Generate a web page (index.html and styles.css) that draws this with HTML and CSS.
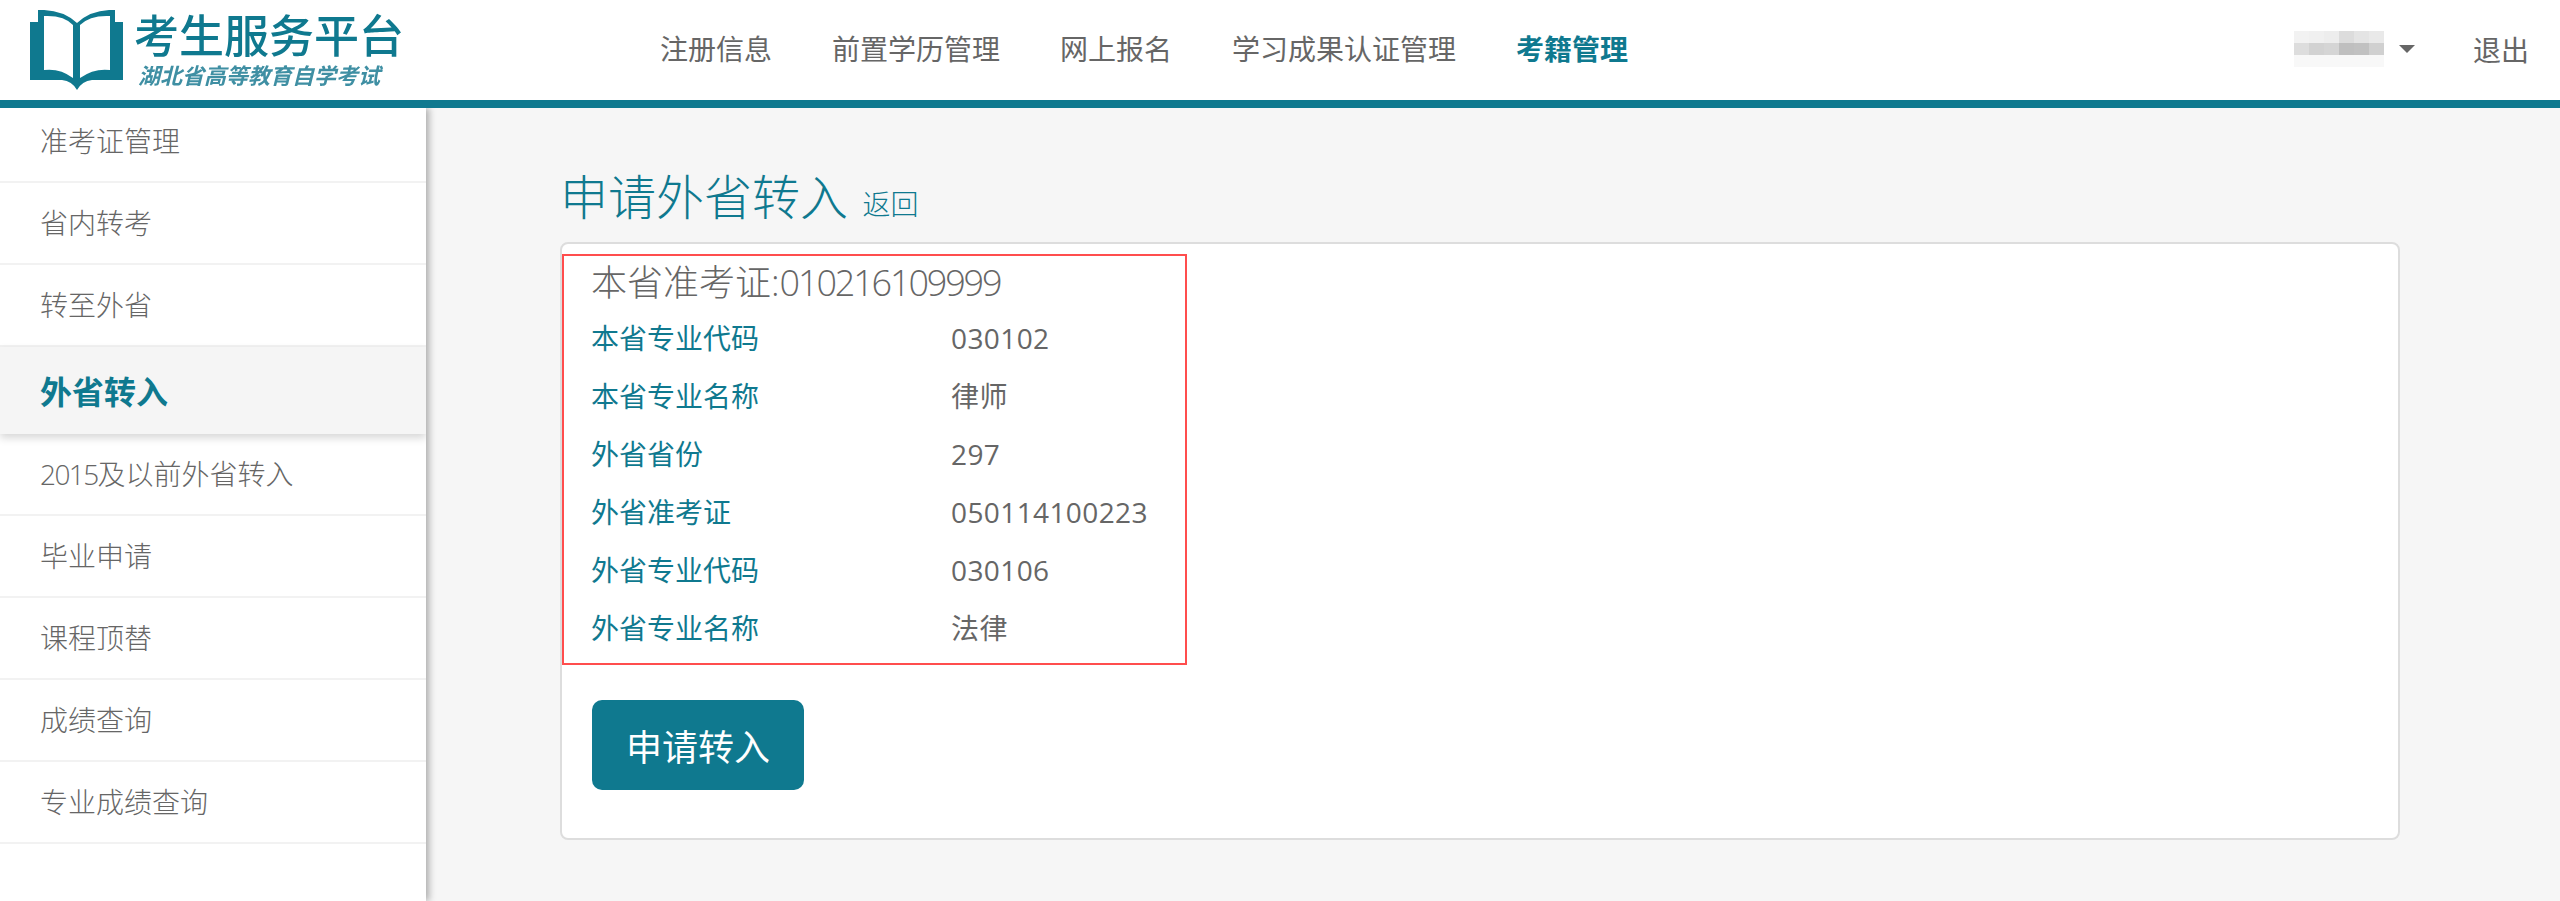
FILE: index.html
```html
<!DOCTYPE html>
<html lang="zh-CN">
<head>
<meta charset="utf-8">
<title>考生服务平台</title>
<link rel="stylesheet" href="styles.css">
</head>
<body>
<header class="topbar">
  <a class="logo">
    <svg class="logo-book" viewBox="0 0 94 80" width="94" height="80">
      <path fill="#0f798f" d="M0 12 H8 V0 Q32 -1 47 13 Q62 -1 85 0 V12 H93 V70 H62 Q52 71 47 80 Q42 71 32 70 H0 Z"/>
      <path fill="#fff" d="M14 6 Q34 5 43 15 V68 Q30 58 14 60 Z"/>
      <path fill="#fff" d="M50 15 Q60 5 80 6 V60 Q64 58 50 68 Z"/>
    </svg>
    <div class="logo-text">
      <div class="logo-title">考生服务平台</div>
      <div class="logo-sub">湖北省高等教育自学考试</div>
    </div>
  </a>
  <nav class="nav">
    <a>注册信息</a>
    <a>前置学历管理</a>
    <a>网上报名</a>
    <a>学习成果认证管理</a>
    <a class="nav-active">考籍管理</a>
  </nav>
  <div class="user">
    <svg class="user-blur" viewBox="0 0 6 3" width="90" height="36" preserveAspectRatio="none">
      <rect x="0" y="0" width="1" height="1" fill="#f2f2f2"/><rect x="1" y="0" width="1" height="1" fill="#f0f0f0"/><rect x="2" y="0" width="1" height="1" fill="#ededed"/><rect x="3" y="0" width="1" height="1" fill="#dcdcdc"/><rect x="4" y="0" width="1" height="1" fill="#e4e4e4"/><rect x="5" y="0" width="1" height="1" fill="#e9e9e9"/>
      <rect x="0" y="1" width="1" height="1" fill="#dddddd"/><rect x="1" y="1" width="1" height="1" fill="#d2d2d2"/><rect x="2" y="1" width="1" height="1" fill="#d5d5d5"/><rect x="3" y="1" width="1" height="1" fill="#bfbfbf"/><rect x="4" y="1" width="1" height="1" fill="#c1c1c1"/><rect x="5" y="1" width="1" height="1" fill="#d0d0d0"/>
      <rect x="0" y="2" width="6" height="1" fill="#f8f8f8"/>
    </svg>
    <span class="caret"></span>
    <a class="logout">退出</a>
  </div>
</header>
<div class="layout">
  <aside class="sidebar">
    <ul class="side-list">
      <li>准考证管理</li>
      <li>省内转考</li>
      <li>转至外省</li>
      <li class="side-active">外省转入</li>
      <li><span class="side-num">2015</span>及以前外省转入</li>
      <li>毕业申请</li>
      <li>课程顶替</li>
      <li>成绩查询</li>
      <li>专业成绩查询</li>
    </ul>
  </aside>
  <main class="main">
    <h1 class="page-title">申请外省转入 <a class="back">返回</a></h1>
    <section class="card">
      <div class="detail">
        <h2 class="detail-title">本省准考证:<span class="detail-num">010216109999</span></h2>
        <dl class="row"><dt>本省专业代码</dt><dd>030102</dd></dl>
        <dl class="row"><dt>本省专业名称</dt><dd>律师</dd></dl>
        <dl class="row"><dt>外省省份</dt><dd>297</dd></dl>
        <dl class="row"><dt>外省准考证</dt><dd>050114100223</dd></dl>
        <dl class="row"><dt>外省专业代码</dt><dd>030106</dd></dl>
        <dl class="row"><dt>外省专业名称</dt><dd>法律</dd></dl>
      </div>
      <button class="submit">申请转入</button>
    </section>
  </main>
</div>
</body>
</html>
```
FILE: styles.css
```css
* { box-sizing: border-box; }
html, body { margin: 0; height: 901px; overflow: hidden; }
body {
  background: #f6f6f6;
  color: #666;
  font-family: "Open Sans", "Noto Sans CJK SC", sans-serif;
  font-weight: 300;
  font-size: 28px;
}
a { color: inherit; text-decoration: none; }

.topbar {
  position: relative;
  z-index: 2;
  display: flex;
  align-items: center;
  height: 108px;
  padding: 0 31px 2px 30px;
  background: #fff;
  border-bottom: 8px solid #0f798f;
}
.logo { display: flex; align-items: flex-start; width: 630px; height: 98px; padding-top: 10px; }
.logo-book { flex: none; }
.logo-text {
  margin-left: 10px;
  margin-top: 2px;
  font-family: "Liberation Sans", "Noto Sans CJK SC", sans-serif;
  filter: blur(.6px);
}
.logo-title {
  color: #0f798f;
  font-size: 45px;
  line-height: 52px;
  font-weight: 500;
  white-space: nowrap;
}
.logo-sub {
  margin: 0 0 0 4px;
  color: #3f8fa3;
  font-size: 22px;
  line-height: 25px;
  font-style: italic;
  font-weight: 700;
  white-space: nowrap;
}
.nav { display: flex; gap: 60px; line-height: 40px; font-weight: 400; }
.nav-active { color: #0f798f; font-weight: 700; }
.user { display: flex; align-items: center; margin-left: auto; font-weight: 400; }
.user-blur { display: block; }
.caret {
  width: 0;
  height: 0;
  margin-left: 15px;
  border-top: 8px solid #666;
  border-left: 8px solid transparent;
  border-right: 8px solid transparent;
}
.logout { margin-left: 58px; }

.layout { display: flex; height: 793px; }
.sidebar {
  flex: none;
  width: 426px;
  background: #fff;
  box-shadow: 3px 0 7px rgba(0, 0, 0, .3);
  overflow: hidden;
}
.side-list { margin: -7px 0 0; padding: 0; list-style: none; }
.side-list li {
  height: 82px;
  padding-left: 40px;
  line-height: 81px;
  border-bottom: 2px solid #f2f2f2;
}
.side-num { letter-spacing: -1.6px; }
.side-list .side-active {
  height: 87px;
  line-height: 90px;
  color: #0f798f;
  background: #f5f5f5;
  font-size: 32px;
  font-weight: 700;
  border-bottom: 0;
  box-shadow: 0 4px 8px rgba(0, 0, 0, .16);
  position: relative;
}

.main { flex: 1; padding: 0 160px 0 134px; }
.page-title {
  margin: 0;
  height: 134px;
  padding-top: 59px;
  color: #0f798f;
  font-size: 48px;
  line-height: 60px;
  font-weight: 300;
}
.back { font-size: 28px; margin-left: 2px; }
.card {
  height: 598px;
  padding: 10px 0 0;
  background: #fff;
  border: 2px solid #ddd;
  border-radius: 8px;
}
.detail {
  width: 625px;
  height: 411px;
  padding: 0 27px;
  border: 2px solid #ff4d4d;
}
.detail-title {
  margin: 0;
  height: 53px;
  font-size: 36px;
  line-height: 54px;
  font-weight: 300;
  white-space: nowrap;
}
.detail-num { letter-spacing: -2.15px; }
.row { display: flex; margin: 0; height: 58px; line-height: 58px; font-weight: 400; }
.row dt { width: 360px; color: #0f798f; }
.row dd { margin: 0; letter-spacing: .4px; }
.submit {
  display: block;
  width: 212px;
  height: 90px;
  margin: 35px 0 0 30px;
  padding: 0;
  color: #fff;
  background: #0f798f;
  border: 0;
  border-radius: 10px;
  font: 400 36px "Open Sans", "Noto Sans CJK SC", sans-serif;
}
```
